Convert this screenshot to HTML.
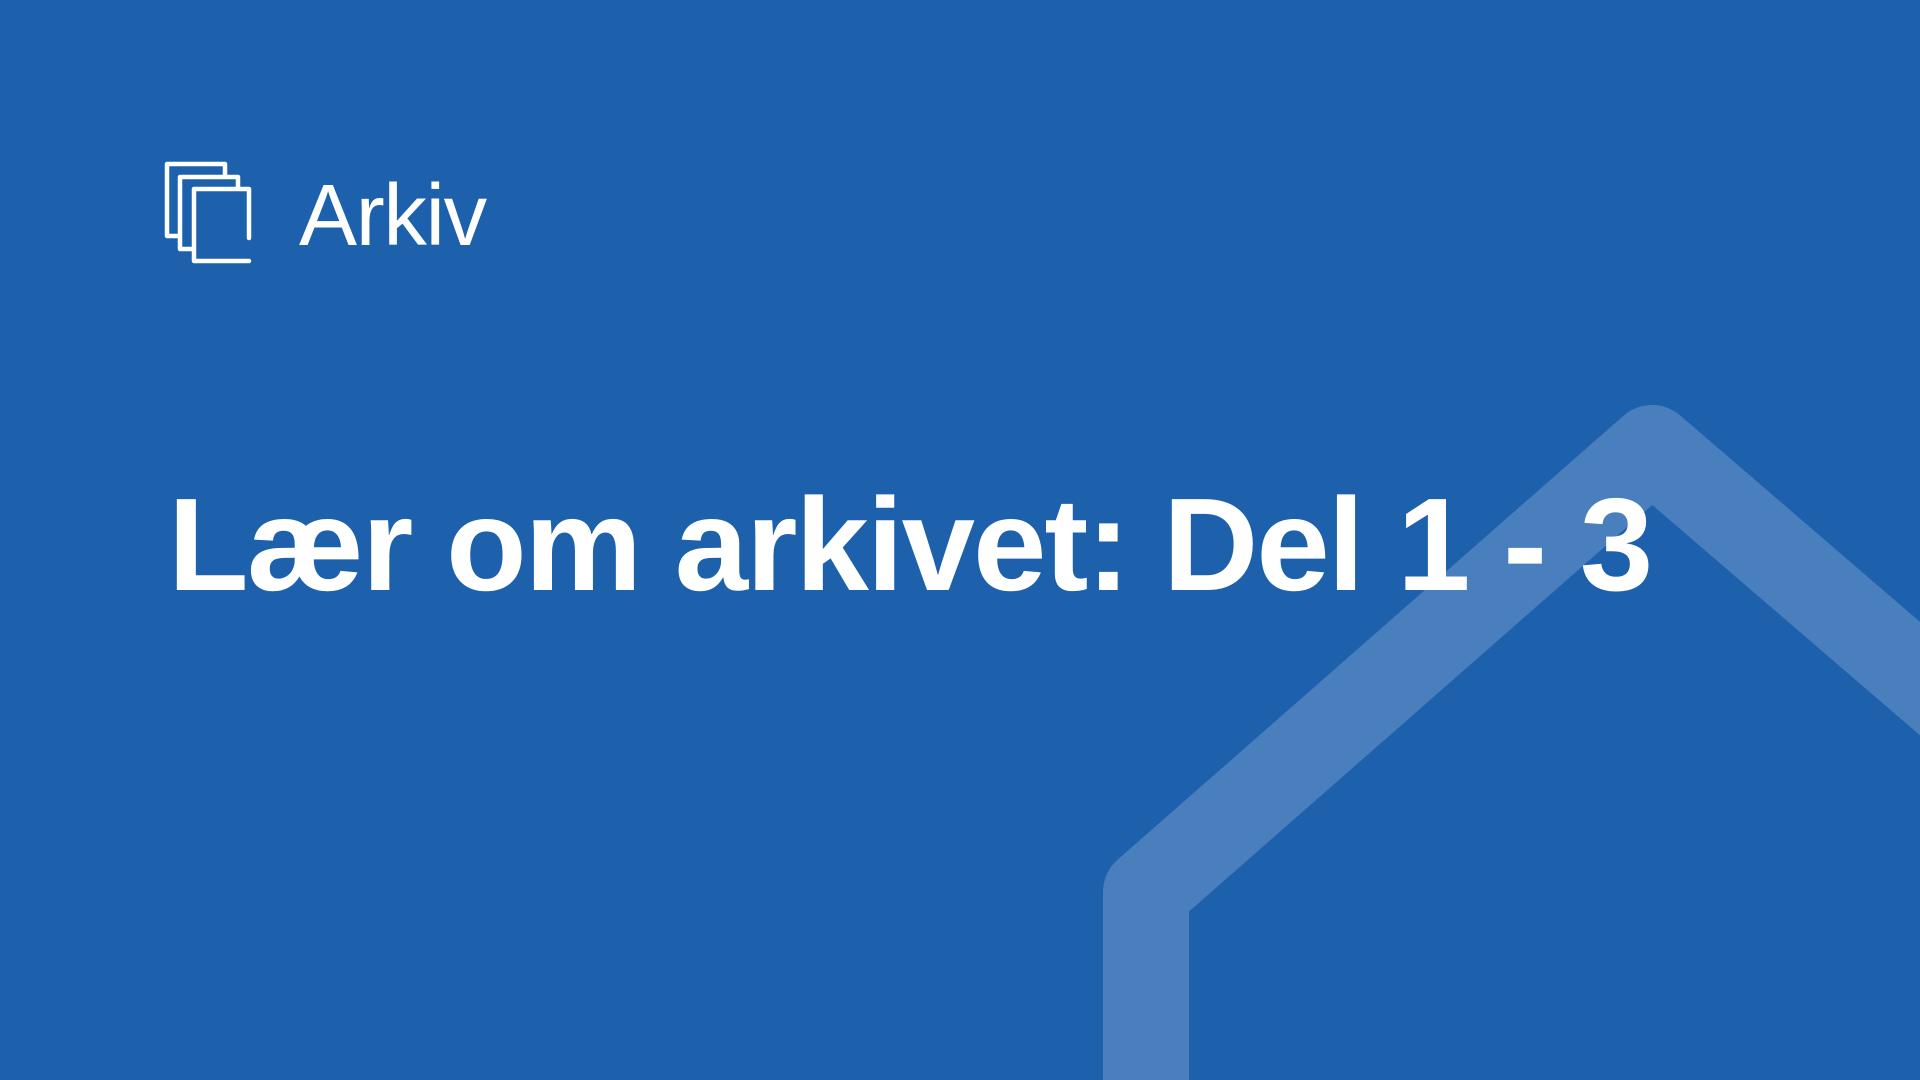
<!DOCTYPE html>
<html><head><meta charset="utf-8"><style>
html,body{margin:0;padding:0}
body{width:1920px;height:1080px;background:#1d61ad;position:relative;overflow:hidden;font-family:"Liberation Sans",sans-serif;color:#fff}
.logo{position:absolute;left:299px;top:172px;font-size:87px;line-height:1;letter-spacing:-1.3px}
.title{position:absolute;left:168px;top:479px;font-size:132px;line-height:1;font-weight:bold;white-space:nowrap;letter-spacing:-2px}
svg{position:absolute;left:0;top:0}
</style></head><body>
<svg width="1920" height="1080">
<polyline points="1146,1100 1146,892 1652,448 1960,713" fill="none" stroke="#4a7fbd" stroke-width="86" stroke-linejoin="round"/>
<g fill="none" stroke="#fff" stroke-width="4.5" stroke-linecap="round" stroke-linejoin="round">
<path d="M179,236 L167,236 L167,164 L225,164 L225,175"/>
<path d="M192,249 L180,249 L180,177 L238,177 L238,187"/>
<path d="M249,238 L249,189 L194,189 L194,261 L249,261"/>
</g>
</svg>
<div class="logo">Arkiv</div>
<div class="title">Lær om arkivet: Del 1 - 3</div>
</body></html>
